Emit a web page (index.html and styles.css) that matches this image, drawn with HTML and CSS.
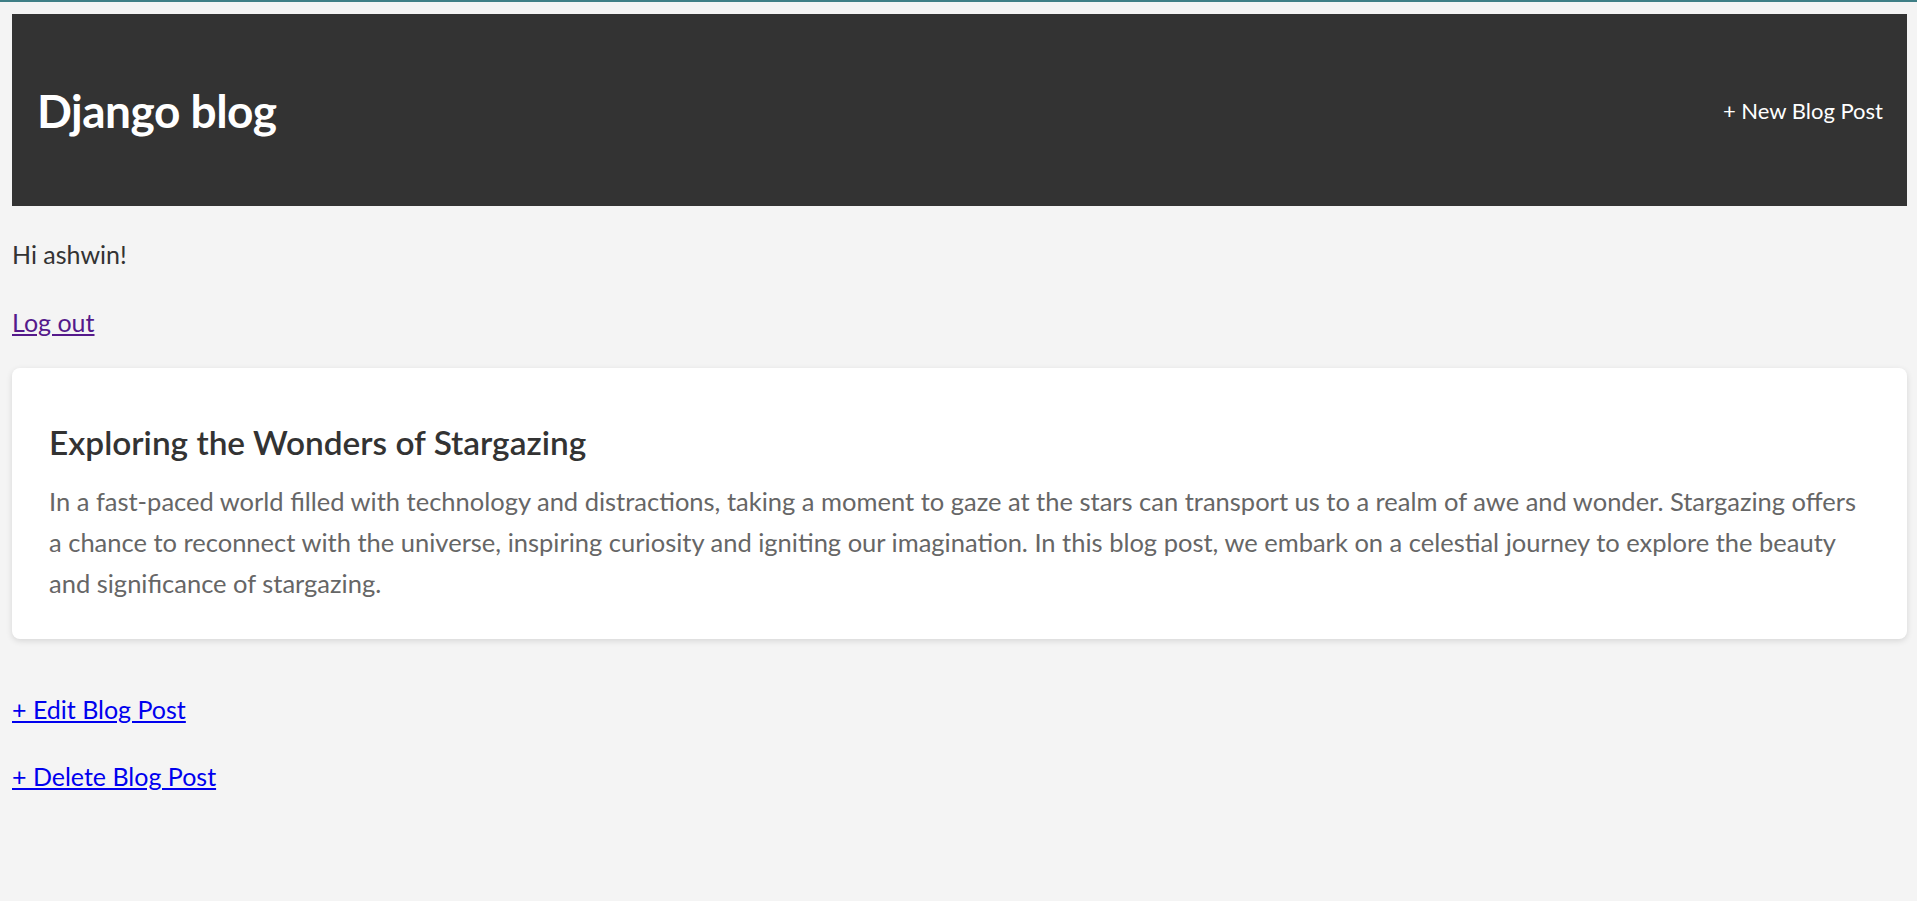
FILE: index.html
```html
<!DOCTYPE html>
<html lang="en">
<head>
<meta charset="utf-8">
<title>Django blog</title>
<link rel="stylesheet" href="styles.css">
</head>
<body>
<div class="topline"></div>
<div class="page">
  <header class="site-header">
    <h1 class="brand">Django blog</h1>
    <a class="nav-link" href="#">+ New Blog Post</a>
  </header>
  <p class="greet">Hi ashwin!</p>
  <p class="logout"><a class="visited" href="#">Log out</a></p>
  <article class="card">
    <h2 class="card-title">Exploring the Wonders of Stargazing</h2>
    <p class="card-text">In a fast-paced world filled with technology and distractions, taking a moment to gaze at the stars can transport us to a realm of awe and wonder. Stargazing offers a chance to reconnect with the universe, inspiring curiosity and igniting our imagination. In this blog post, we embark on a celestial journey to explore the beauty and significance of stargazing.</p>
  </article>
  <div class="actions">
    <p class="action"><a class="blue" href="#">+ Edit Blog Post</a></p>
    <p class="action"><a class="blue" href="#">+ Delete Blog Post</a></p>
  </div>
</div>
</body>
</html>
```

FILE: styles.css
```css
html, body {
  margin: 0;
  padding: 0;
}
body {
  background: #f4f4f4;
  color: #333333;
  font-family: Lato, "Liberation Sans", sans-serif;
  font-size: 25px;
  min-height: 901px;
}
.topline {
  height: 2px;
  background: #3f7f86;
}
.page {
  padding: 12px 10px 0 12px;
}
.site-header {
  background: #333333;
  height: 192px;
  display: flex;
  align-items: center;
  justify-content: space-between;
  padding: 0 24px 0 25px;
  box-sizing: border-box;
}
.brand {
  margin: 0;
  color: #ffffff;
  font-size: 46px;
  font-weight: 700;
  letter-spacing: -0.5px;
}
.nav-link {
  color: #ffffff;
  text-decoration: none;
  font-size: 22px;
}
.greet {
  margin: 28px 0 0 0;
  line-height: 40px;
  color: #333333;
}
.logout {
  margin: 28px 0 0 0;
  line-height: 40px;
}
.visited {
  color: #551a8b;
}
.blue {
  color: #0000ee;
}
.card {
  margin-top: 26px;
  background: #ffffff;
  border-radius: 8px;
  box-shadow: 0 2px 6px rgba(0, 0, 0, 0.12);
  padding: 51px 37px 20px 37px;
  height: 271px;
  box-sizing: border-box;
}
.card-title {
  margin: 0 0 16px 0;
  font-size: 33.4px;
  font-weight: 600;
  color: #333333;
  line-height: 46px;
}
.card-text {
  margin: 0;
  color: #666666;
  font-size: 25.5px;
  line-height: 41px;
}
.actions {
  padding-top: 50px;
}
.action {
  margin: 0 0 27px 0;
  line-height: 40px;
}
```
